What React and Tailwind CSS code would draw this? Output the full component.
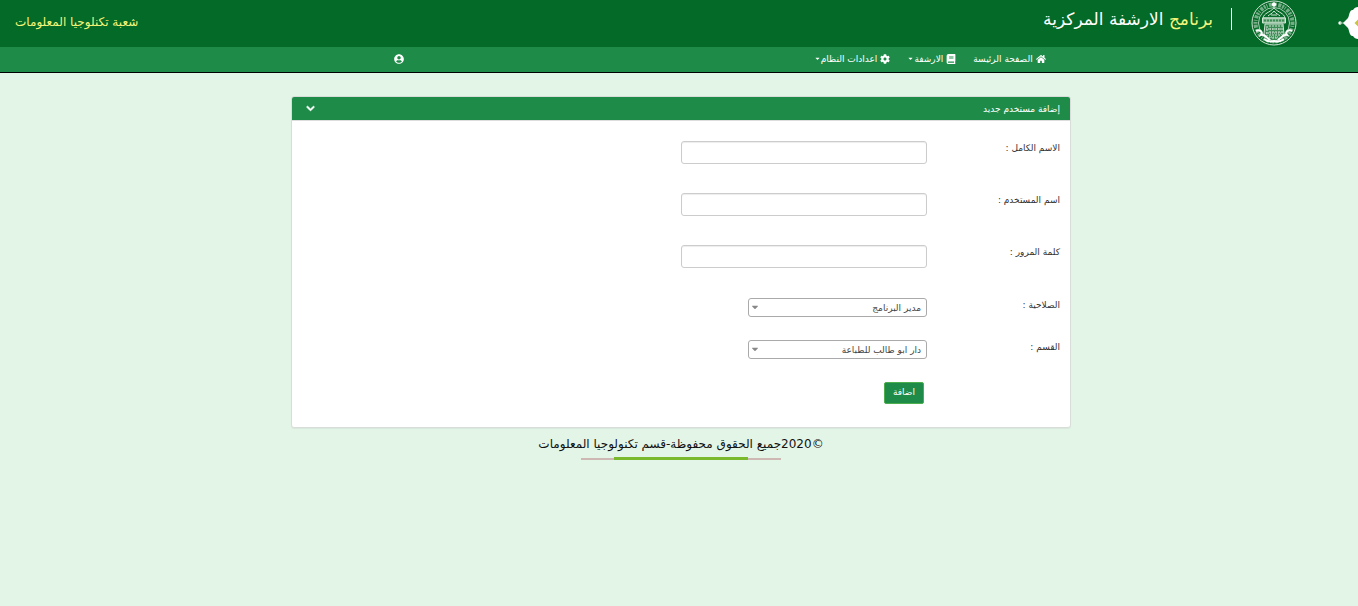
import { useState } from 'react';
import { FaHome, FaBook, FaCog, FaUserCircle, FaChevronDown, FaCaretDown } from 'react-icons/fa';

const NAV = [
  { label: 'الصفحة الرئيسة', Icon: FaHome, menu: false },
  { label: 'الارشفة', Icon: FaBook, menu: true },
  { label: 'اعدادات النظام', Icon: FaCog, menu: true },
];

const TEXT_FIELDS = [
  { id: 'fullName', label: 'الاسم الكامل :', type: 'text' },
  { id: 'userName', label: 'اسم المستخدم :', type: 'text' },
  { id: 'password', label: 'كلمة المرور :', type: 'password' },
];

const SELECT_FIELDS = [
  { id: 'role', label: 'الصلاحية :', options: ['مدير البرنامج'] },
  { id: 'section', label: 'القسم :', options: ['دار ابو طالب للطباعة'] },
];

function Ornament() {
  return (
    <svg width="20" height="38" viewBox="0 0 20 38" aria-hidden="true">
      <circle cx="2" cy="19" r="1.7" fill="#fff" />
      <path d="M2 19h4" stroke="#8fbf9a" strokeWidth="1" />
      <path d="M5 19l5-5c1-2 1-4 2-6 1-2 2-2 3-2 1-2 3-3 5-3v32c-2 0-4-1-5-3-1 0-2 0-3-2-1-2-1-4-2-6z" fill="#fff" />
      <path d="M16.500 19l2-2 1.500-1.500v7l-1.500-1.500z" fill="#c9c34a" />
    </svg>
  );
}

function Emblem() {
  return (
    <svg width="46" height="46" viewBox="0 0 46 46" fill="none" stroke="#d3e5d6" aria-hidden="true">
      <circle cx="23" cy="23" r="22" strokeWidth="1" />
      <circle cx="23" cy="23" r="18.500" strokeWidth="4" strokeDasharray="2 1 1 1.5 3 1" opacity=".55" />
      <circle cx="23" cy="23" r="15.500" strokeWidth="1" opacity=".8" />
      <circle cx="23" cy="4.500" r="2.200" fill="#fff" stroke="none" />
      {/* dome */}
      <path d="M12 18c1-5 6-5 11-10 5 5 10 5 11 10z" fill="#046a27" strokeWidth="1" />
      <path d="M17 16c2-2 4-2 6-5 2 3 4 3 6 5M20 15h6" strokeWidth="1" />
      <path d="M11.500 18h23v5h-23z" fill="#8fbf9a" strokeWidth="1" />
      <path d="M13 20.500h20" stroke="#3d8b55" strokeWidth="2" strokeDasharray="2 1" />
      {/* shrine body */}
      <path d="M14 24h18l1 10c-3 4-6 6-10 8-4-2-7-4-10-8z" fill="#3d8b55" strokeWidth="1" />
      <path d="M16 26v10M19 25v13M22 25v15M25 25v15M28 25v12M31 25v10" strokeWidth="1" strokeDasharray="2 1" />
      <path d="M15 29h16M15 33h16M18 37h10" strokeWidth="1" strokeDasharray="1 1" />
      {/* scrolls */}
      <path d="M5 31c4-2 7 1 5 4 3-1 5 2 9 5M41 31c-4-2-7 1-5 4-3-1-5 2-9 5" stroke="#fff" strokeWidth="2" />
      <path d="M13 39c4 3 7 3 10 2 3 1 6 1 10-2" stroke="#fff" strokeWidth="2" />
    </svg>
  );
}

function Row({ id, label, children }) {
  return (
    <div className="flex items-start">
      <label htmlFor={id} className="w-[133px] shrink-0 text-[9px] leading-[14px] text-[#333]">{label}</label>
      {children}
    </div>
  );
}

export default function App() {
  const [open, setOpen] = useState(true);

  return (
    <div dir="rtl" className="min-h-screen bg-[#e3f5e6] font-['DejaVu_Sans',sans-serif]">
      {/* Header */}
      <header className="flex h-[47px] items-center justify-between bg-[#046a27] pl-[15px]">
        <div className="flex items-center pb-px">
          <Ornament />
          <div className="mr-[41px]">
            <Emblem />
          </div>
          <div className="mr-[19px] mb-2 h-[22px] w-px bg-white" />
          <h1 className="mr-[18px] mb-2 text-[17px] leading-6 text-white">
            <span className="text-[#f5f57a]">برنامج</span> الارشفة المركزية
          </h1>
        </div>
        <p className="mb-1 text-[12px] leading-5 text-[#f5f57a]">شعبة تكنلوجيا المعلومات</p>
      </header>

      {/* Nav */}
      <nav className="flex h-[26px] items-center justify-between border-b border-black bg-[#1e8c48] pr-[23%] pb-[2px] pl-[29%] text-white">
        <ul className="flex items-center gap-[17px]">
          {NAV.map(({ label, Icon, menu }) => (
            <li key={label}>
              <a href="#" className="flex items-center gap-[3px] text-[9px] leading-4 whitespace-nowrap">
                <Icon size={10} />
                <span>{label}</span>
                {menu && <FaCaretDown size={7} className="-mr-[3px]" />}
              </a>
            </li>
          ))}
        </ul>
        <a href="#" aria-label="المستخدم">
          <FaUserCircle size={10} />
        </a>
      </nav>

      <main className="pt-[23px] pl-1">
        <section className="mx-auto w-full max-w-[780px] rounded-[3px] border border-[#d8ddd9] bg-white shadow-[0_1px_1px_rgba(0,0,0,0.05)]">
          <div className="flex h-[23px] items-center justify-between rounded-t-[2px] bg-[#1e8c48] pr-[10px] pl-[14px] text-white">
            <h2 className="text-[9px] leading-4">إضافة مستخدم جديد</h2>
            <button type="button" aria-label="طي" onClick={() => setOpen(!open)}>
              <FaChevronDown size={9} stroke="currentColor" strokeWidth={40} />
            </button>
          </div>

          {open && (
            <form className="border-t border-[#ddd] px-[10px] pt-5 pb-[23px]" onSubmit={e => e.preventDefault()}>
              <div className="space-y-[29px]">
                {TEXT_FIELDS.map(f => (
                  <Row key={f.id} id={f.id} label={f.label}>
                    <input
                      id={f.id}
                      type={f.type}
                      className="h-[23px] w-[246px] rounded-[3px] border border-[#ccc] bg-white px-2 text-[9px] shadow-[inset_0_1px_1px_rgba(0,0,0,0.075)] outline-none"
                    />
                  </Row>
                ))}
              </div>
              <div className="mt-[30px] space-y-[23px]">
                {SELECT_FIELDS.map(f => (
                  <Row key={f.id} id={f.id} label={f.label}>
                    <div className="relative w-[179px]">
                      <select
                        id={f.id}
                        className="block h-[19px] w-full appearance-none rounded-[3px] border border-[#aaa] bg-white pr-[5px] pl-4 text-[9px] leading-4 text-[#444] outline-none"
                      >
                        {f.options.map(o => <option key={o}>{o}</option>)}
                      </select>
                      <FaCaretDown size={10} className="pointer-events-none absolute top-1 left-[2px] text-[#888]" />
                    </div>
                  </Row>
                ))}
              </div>
              <button
                type="submit"
                className="mt-[23px] mr-[136px] block h-[22px] w-10 rounded-[2px] border border-[#4cae4c] bg-[#1e8c48] text-[9px] text-white"
              >
                اضافة
              </button>
            </form>
          )}
        </section>

        {/* Footer */}
        <footer className="flex flex-col items-center pt-1">
          <p className="text-[12px] leading-6 font-medium text-[#111]">©2020جميع الحقوق محفوظة-قسم تكنولوجيا المعلومات</p>
          <div className="flex w-[200px] items-center pt-px">
            <div className="h-[2px] flex-1 bg-[#cdb8b3]" />
            <div className="h-[3px] w-[134px] bg-[#7ab82c]" />
            <div className="h-[2px] flex-1 bg-[#cdb8b3]" />
          </div>
        </footer>
      </main>
    </div>
  );
}
